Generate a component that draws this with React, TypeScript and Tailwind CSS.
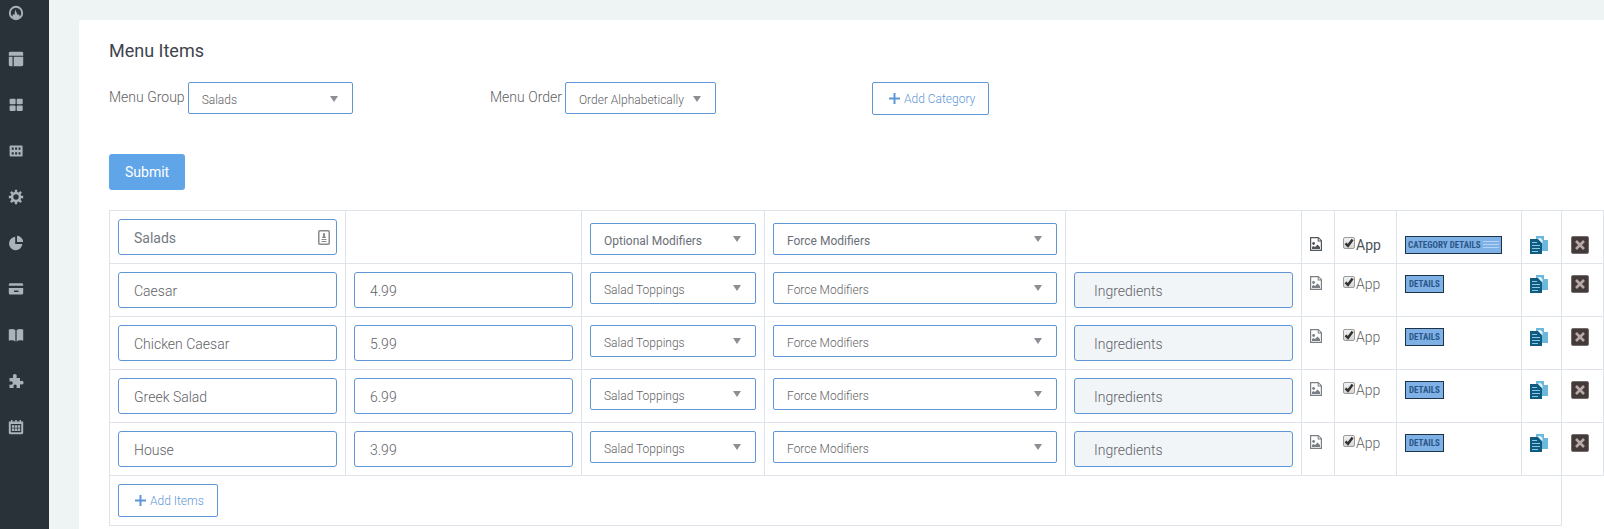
import React from "react";

const items = [
  { name: "Caesar", price: "4.99" },
  { name: "Chicken Caesar", price: "5.99" },
  { name: "Greek Salad", price: "6.99" },
  { name: "House", price: "3.99" },
];

const navItems: { label: string; icon: React.ReactNode }[] = [
  {
    label: "Dashboard",
    icon: (
      <>
        <circle cx="8" cy="8" r="6.2" fill="none" stroke="currentColor" strokeWidth="1.900" />
        <path d="M3.800 12.600 5.200 9l1.300 1L7.200 4.500 9.700 10l1.300-.8 1.200 3.400L8 14.500z" />
      </>
    ),
  },
  {
    label: "Layout",
    icon: <path d="M2.200 .8h11.600A1.400 1.400 0 0 1 15.200 2.200V4.800H.8V2.200A1.400 1.400 0 0 1 2.200 .8zM.8 5.800h3.700v9.400H2.200A1.400 1.400 0 0 1 .8 13.800zM5.700 5.800h9.500v8a1.400 1.400 0 0 1-1.400 1.400H5.700z" />,
  },
  {
    label: "Tiles",
    icon: (
      <>
        <rect x="1.600" y="1.800" width="6" height="5.500" rx="1" />
        <rect x="8.700" y="1.800" width="6" height="5.500" rx="1" />
        <rect x="1.600" y="8.500" width="6" height="5.500" rx="1" />
        <rect x="8.700" y="8.500" width="6" height="5.500" rx="1" />
      </>
    ),
  },
  {
    label: "Grid",
    icon: (
      <path
        fillRule="evenodd"
        d="M2.600 2.400h11a1 1 0 0 1 1 1v9.200a1 1 0 0 1-1 1h-11a1 1 0 0 1-1-1V3.400a1 1 0 0 1 1-1zM3.700 4.500v2.300h2V4.500zM7.100 4.500v2.300h2V4.500zM10.500 4.500v2.300h2V4.500zM3.700 9.200v2.300h2V9.200zM7.100 9.200v2.300h2V9.200zM10.500 9.200v2.300h2V9.200z"
      />
    ),
  },
  {
    label: "Settings",
    icon: (
      <>
        <circle cx="8" cy="8" r="4" fill="none" stroke="currentColor" strokeWidth="2.600" />
        <path
          d="M8 .8v2.700M8 12.500v2.700M.8 8h2.700M12.500 8h2.700M2.900 2.900l1.900 1.900M11.200 11.200l1.900 1.900M2.900 13.100l1.900-1.900M11.200 4.800l1.900-1.900"
          fill="none"
          stroke="currentColor"
          strokeWidth="2.400"
        />
      </>
    ),
  },
  {
    label: "Reports",
    icon: <path d="M7.200 1.800v7.200h7.200a6.700 6.700 0 1 1-7.200-7.200zM9 .8A6.400 6.400 0 0 1 15.200 7H9z" />,
  },
  {
    label: "Payments",
    icon: (
      <path
        fillRule="evenodd"
        d="M2.200 2.300h11.600a1.400 1.400 0 0 1 1.400 1.400v1H.8v-1a1.400 1.400 0 0 1 1.400-1.400zM.8 7h14.400v5.200a1.400 1.400 0 0 1-1.400 1.400H2.200A1.400 1.400 0 0 1 .8 12.200zM6 9.600v1.300h4.500V9.600z"
      />
    ),
  },
  {
    label: "Catalog",
    icon: <path d="M.8 2.500C3.500 1.500 5.500 1.800 7.400 3v11.500C5.500 13.300 3.500 13 .8 13.800zM15.200 2.500c-2.700-1-4.700-.7-6.600.5v11.500c1.900-1.200 3.900-1.500 6.600-.7z" />,
  },
  {
    label: "Plugins",
    icon: <path d="M1.500 5H5c.4-.5-.2-1.200-.2-2a2 2 0 0 1 4 0c0 .8-.6 1.500-.2 2H12v3c.5.400 1-.2 1.700-.2a1.900 1.900 0 0 1 0 3.800c-.7 0-1.200-.6-1.700-.2V15H8.600c-.4-.5.2-1 .2-1.700a1.700 1.700 0 0 0-3.400 0c0 .7.600 1.200.2 1.700H1.500v-3.400c.5-.4 1 .1 1.600.1a1.700 1.700 0 0 0 0-3.400c-.6 0-1.100.5-1.600.1z" />,
  },
  {
    label: "Calendar",
    icon: (
      <path
        fillRule="evenodd"
        d="M.8 2.500H3V1h1.500v1.500h2.700V1h1.600v1.500h2.700V1H13v1.500h2.200v11.200a1.500 1.500 0 0 1-1.500 1.500H2.300a1.500 1.500 0 0 1-1.500-1.500zM2.800 5v8.200h10.400V5zM3.800 6.200h2.400v2.500H3.800zM6.800 6.200h2.400v2.500H6.800zM9.800 6.200h2.400v2.500H9.800zM3.800 9.500h2.400V12H3.800zM6.800 9.500h2.400V12H6.800zM9.800 9.500h2.400V12H9.800z"
      />
    ),
  },
];

function Select({ id, label, value, bold, width }: { id?: string; label?: string; value: string; bold?: boolean; width?: string }) {
  return (
    <div className={`grid ${width ?? "w-full"}`}>
      <select
        id={id}
        aria-label={label}
        className={`col-start-1 row-start-1 h-8 w-full appearance-none rounded-[2px] border border-[#5f97d6] bg-white pt-[3px] pr-6 pl-[13px] text-xs outline-none ${bold ? "font-normal text-[#6b7078]" : "font-light text-[#5f6266]"}`}
      >
        <option>{value}</option>
      </select>
      <svg viewBox="0 0 8 6" aria-hidden="true" className="pointer-events-none col-start-1 row-start-1 mr-[15px] h-1.5 w-2 self-center justify-self-end fill-[#8b8f94]">
        <path d="M0 0h8L4 6z" />
      </svg>
    </div>
  );
}

function TextInput({ label, value, bold }: { label: string; value: string; bold?: boolean }) {
  return (
    <input
      aria-label={label}
      defaultValue={value}
      className={`block h-9 w-full rounded-[3px] border border-[#5f97d6] bg-white px-[15px] pt-0.5 text-sm outline-none ${bold ? "font-normal text-[#757980]" : "font-light text-[#5f6266]"}`}
    />
  );
}

function AddButton({ children }: { children: React.ReactNode }) {
  return (
    <button className="flex h-[33px] items-center gap-1 rounded-[2px] border border-[#5f97d6] bg-white pr-[13px] pl-4 text-xs font-light text-[#5f97d6]">
      <svg viewBox="0 0 11 11" aria-hidden="true" className="size-[11px]">
        <path d="M5.500 0v11M0 5.500h11" stroke="currentColor" strokeWidth="2" />
      </svg>
      {children}
    </button>
  );
}

function ImageButton({ label, bold }: { label: string; bold?: boolean }) {
  return (
    <button aria-label={label} className={`flex h-[22px] items-center ${bold ? "text-[#50555c]" : "text-[#7a7f85]"}`}>
      <svg viewBox="0 0 12 14" className="h-3.5 w-3 fill-current">
        <path fillRule="evenodd" d="M0 0h8.500L12 3.500V14H0zM1.200 1.200v11.600h9.600V4.500H7.700V1.200zM8.700 1.600v1.900h1.900z" />
        <circle cx="3.600" cy="6.500" r="1.400" />
        <path d="M2 12v-2l1.500-1 1.500 1 2.500-2.500L10 10v2z" />
      </svg>
    </button>
  );
}

function AppCheck({ id, bold }: { id: string; bold?: boolean }) {
  return (
    <label htmlFor={id} className={`flex h-[22px] text-sm leading-[25px] ${bold ? "font-normal text-[#4d5259]" : "font-light text-[#5f6266]"}`}>
      <span className="mt-1 mr-px grid size-3 shrink-0">
        <input
          id={id}
          type="checkbox"
          defaultChecked
          className="peer col-start-1 row-start-1 size-3 appearance-none rounded-[2px] border border-[#9b9b9b] bg-linear-to-b from-[#f2f2f2] to-[#d6d6d6]"
        />
        <svg viewBox="0 0 12 12" aria-hidden="true" className="pointer-events-none invisible col-start-1 row-start-1 size-3 peer-checked:visible">
          <path d="M2.500 6.300 5 8.800 9.600 2.600" fill="none" stroke="#333" strokeWidth="2.500" />
        </svg>
      </span>
      App
    </label>
  );
}

function DetailsButton({ label, lines }: { label: string; lines?: boolean }) {
  return (
    <div className="pt-[3px] pb-px">
      <button
        className={`flex h-[18px] items-center gap-0.5 border border-[#1d3347] bg-[#80b1e6] font-['Roboto_Condensed','Open_Sans_Condensed','Liberation_Sans_Narrow',sans-serif] text-[9px] font-bold whitespace-nowrap text-[#2a5787] ${lines ? "px-0.5" : "px-[3px]"}`}
      >
        {label}
        {lines && (
          <svg viewBox="0 0 16 8" aria-hidden="true" className="h-2 w-4">
            <path d="M0 .5h16M0 3.500h16M0 6.500h16" stroke="#b4d4f5" strokeWidth="1" />
          </svg>
        )}
      </button>
    </div>
  );
}

function CopyButton() {
  return (
    <button aria-label="Copy" className="block pt-[3px] pb-px">
      <svg viewBox="0 0 18 18" className="size-[18px]">
        <path d="M6 0h8v4h4v11H6z" fill="#6bb8dc" />
        <path d="M0 3h8l4 4v11H0z" fill="#0f5c80" />
        <path d="M7.500 2.500 12.500 7.500V4L10.500 2z" fill="#e6f5fb" />
        <path d="M2 6.500h5M2 9.500h8M2 12.500h8M2 15.500h6" stroke="#8cc9e6" strokeWidth="1" />
      </svg>
    </button>
  );
}

function DeleteButton() {
  return (
    <button aria-label="Delete" className="ml-px block pt-[3px] pb-px">
      <svg viewBox="0 0 18 18" className="size-[18px]">
        <rect x=".5" y=".5" width="17" height="17" rx="1.500" fill="#433a3a" stroke="#756b6a" />
        <path d="m5 5 8 8M13 5l-8 8" stroke="#b8a9a6" strokeWidth="2.600" />
      </svg>
    </button>
  );
}

function RowActions({ id, label, bold }: { id: string; label: string; bold?: boolean }) {
  const cell = "border border-[#dfe4ea] p-2";
  return (
    <>
      <td className={cell}>
        <ImageButton label="Image" bold={bold} />
      </td>
      <td className={cell}>
        <AppCheck id={id} bold={bold} />
      </td>
      <td className={cell}>
        <DetailsButton label={label} lines={bold} />
      </td>
      <td className={cell}>
        <CopyButton />
      </td>
      <td className={cell}>
        <DeleteButton />
      </td>
    </>
  );
}

export default function App() {
  const cell = "border border-[#dfe4ea] p-2";
  return (
    <div className="flex h-screen overflow-hidden bg-[#eef3f4] font-[Roboto,sans-serif] text-sm font-light text-[#5f6266]">
      <nav className="flex w-[49px] shrink-0 flex-col gap-[30px] bg-[#283238] pt-[5px] pl-2">
        {navItems.map((item) => (
          <a key={item.label} href="#" aria-label={item.label} className="block size-4 text-[#a9b3b9]">
            <svg viewBox="0 0 16 16" className="size-4 fill-current">
              {item.icon}
            </svg>
          </a>
        ))}
      </nav>
      <main className="min-w-0 flex-1 pt-5 pl-[30px]">
        <section className="min-h-full rounded-tl-[2px] bg-white pt-[19px] pl-[30px]">
          <h1 className="text-[18px] leading-6 font-normal text-[#3d444d]">Menu Items</h1>
          <div className="mt-[19px] flex">
            <div className="flex w-[381px] gap-[3px]">
              <label htmlFor="menu-group" className="leading-[30px]">
                Menu Group
              </label>
              <Select id="menu-group" value="Salads" width="w-[165px]" />
            </div>
            <div className="flex w-[382px] gap-[3px]">
              <label htmlFor="menu-order" className="leading-[30px]">
                Menu Order
              </label>
              <Select id="menu-order" value="Order Alphabetically" width="w-[151px]" />
            </div>
            <AddButton>Add Category</AddButton>
          </div>
          <button className="mt-[39px] block h-9 rounded-[3px] bg-[#60a5e8] px-4 text-sm font-normal text-white">Submit</button>
          <table className="mt-5 w-full min-w-[1495px] table-fixed border-collapse">
            <colgroup>
              <col className="w-[236px]" />
              <col className="w-[236px]" />
              <col className="w-[183px]" />
              <col />
              <col className="w-[236px]" />
              <col className="w-[33px]" />
              <col className="w-[62px]" />
              <col className="w-[125px]" />
              <col className="w-[40px]" />
              <col className="w-[42px]" />
            </colgroup>
            <thead className="align-bottom">
              <tr>
                <td className={cell}>
                  <div className="grid items-center">
                    <div className="col-start-1 row-start-1">
                      <TextInput label="Category name" value="Salads" bold />
                    </div>
                    <svg viewBox="0 0 12 15" aria-hidden="true" className="pointer-events-none col-start-1 row-start-1 mr-[7px] h-[15px] w-3 justify-self-end">
                      <rect x=".75" y=".75" width="10.500" height="13.500" rx="1" fill="#fff" stroke="#8a8a8a" strokeWidth="1.500" />
                      <path d="M6 3a1 1 0 0 1 1 1v2l1.200 2H3.800L5 6V4a1 1 0 0 1 1-1zM3.500 9h5v1h-5zM3.500 11h5v1h-5z" fill="#8a8a8a" />
                    </svg>
                  </div>
                </td>
                <td className={cell} />
                <td className={cell}>
                  <Select label="Optional modifiers" value="Optional Modifiers" bold />
                </td>
                <td className={cell}>
                  <Select label="Force modifiers" value="Force Modifiers" bold />
                </td>
                <td className={cell} />
                <RowActions id="app-category" label="CATEGORY DETAILS" bold />
              </tr>
            </thead>
            <tbody className="align-top">
              {items.map((item, i) => (
                <tr key={item.name}>
                  <td className={cell}>
                    <TextInput label="Item name" value={item.name} />
                  </td>
                  <td className={cell}>
                    <TextInput label="Price" value={item.price} />
                  </td>
                  <td className={cell}>
                    <Select label="Optional modifiers" value="Salad Toppings" />
                  </td>
                  <td className={cell}>
                    <Select label="Force modifiers" value="Force Modifiers" />
                  </td>
                  <td className={cell}>
                    <button className="block h-9 w-full rounded-[3px] border border-[#5f97d6] bg-[#f1f5f8] px-[19px] pt-0.5 text-left text-sm font-light">
                      Ingredients
                    </button>
                  </td>
                  <RowActions id={`app-${i}`} label="DETAILS" />
                </tr>
              ))}
              <tr>
                <td colSpan={9} className={cell}>
                  <AddButton>Add Items</AddButton>
                </td>
              </tr>
            </tbody>
          </table>
        </section>
      </main>
    </div>
  );
}
